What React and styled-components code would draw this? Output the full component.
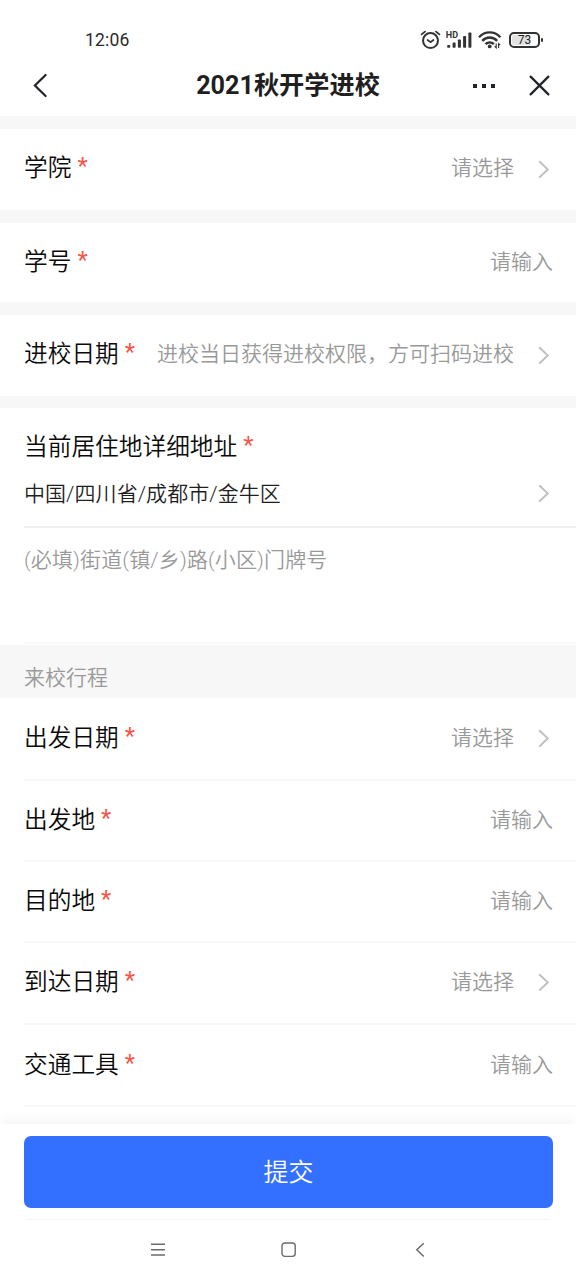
import React from "react"
import styled, { createGlobalStyle } from "styled-components"

const trip = [
  { label: "出发日期", hint: "请选择", arrow: true, height: 82 },
  { label: "出发地", hint: "请输入", height: 81 },
  { label: "目的地", hint: "请输入", height: 81 },
  { label: "到达日期", hint: "请选择", arrow: true, height: 82 },
  { label: "交通工具", hint: "请输入", height: 82 },
]

const Arrow = () => (
  <ArrowIcon viewBox="0 0 12 20">
    <path d="M1.2 1.2 L9.7 9.4 L1.2 17.6" />
  </ArrowIcon>
)

const Field = ({ label, hint, arrow, height, line }) => (
  <Row $height={height} $line={line} $input={!arrow}>
    <Label>
      {label}
      <Star>*</Star>
    </Label>
    <Hint>{hint}</Hint>
    {arrow && <Arrow />}
  </Row>
)

const AlarmIcon = () => (
  <svg width="21" height="20" viewBox="0 0 21 20" fill="none" stroke="#333" strokeWidth="2" strokeLinecap="round">
    <circle cx="10.5" cy="10.6" r="7.5" />
    <path d="M1.6 4.4 L5 1.6 M19.4 4.4 L16 1.6" strokeWidth="1.8" />
    <path d="M7.6 10 L10.4 12.2 L13.4 10" strokeWidth="1.7" strokeLinejoin="round" />
  </svg>
)

const SignalIcon = () => (
  <svg width="27" height="20" viewBox="0 0 27 20">
    <g fill="#333">
      <rect x="1.2" y="15" width="3" height="2.8" rx="0.8" />
      <rect x="6.6" y="12.6" width="3" height="5.2" rx="0.8" />
      <rect x="11.9" y="9.4" width="3" height="8.4" rx="0.8" />
      <rect x="17.1" y="6" width="3" height="11.8" rx="0.8" />
      <rect x="22.4" y="2.5" width="3" height="15.3" rx="0.8" />
    </g>
    <text x="-0.2" y="8" fontSize="9" fontWeight="700" fontFamily="Roboto, sans-serif" fill="#333">
      HD
    </text>
  </svg>
)

const WifiIcon = () => (
  <svg width="24" height="20" viewBox="0 0 24 20" fill="none" stroke="#333" strokeWidth="2.4">
    <path d="M1 7.2 C7 0.7 16.4 0.7 22.4 7.2" />
    <path d="M4.2 10.8 C8.6 6.4 14.8 6.4 19.2 10.8" />
    <path d="M7.5 14.2 C10 11.8 13.4 11.8 15.9 14.2" />
    <circle cx="11.7" cy="16.4" r="1.9" fill="#333" stroke="none" />
    <path d="M18.2 13.4 V17.8 L16.6 16.2 M20.6 18 V13.6 L22.2 15.2" strokeWidth="1.1" />
  </svg>
)

const App = () => {
  return (
    <Page>
      <GlobalStyle />
      <StatusBar>
        <Clock>12:06</Clock>
        <StatusIcons>
          <AlarmIcon />
          <SignalIcon />
          <WifiIcon />
          <Battery>
            <Charge>73</Charge>
          </Battery>
        </StatusIcons>
      </StatusBar>
      <Header>
        <HeaderIcon viewBox="0 0 24 26" $width={24}>
          <path d="M17.6 2 L6.9 12.5 L17.6 23" />
        </HeaderIcon>
        <Title>2021秋开学进校</Title>
        <Dots>
          <i />
          <i />
          <i />
        </Dots>
        <HeaderIcon viewBox="0 0 22 26" $width={22}>
          <path d="M2.6 3.6 L20.4 21.4 M20.4 3.6 L2.6 21.4" />
        </HeaderIcon>
      </Header>

      <Gap $height={13} />
      <Field label="学院" hint="请选择" arrow height={81} />
      <Gap $height={13} />
      <Field label="学号" hint="请输入" height={79} />
      <Gap $height={13} />
      <Field label="进校日期" hint="进校当日获得进校权限，方可扫码进校" arrow height={81} />
      <Gap $height={12} />
      <Address>
        <Label>
          当前居住地详细地址
          <Star>*</Star>
        </Label>
        <Region>
          <span>中国/四川省/成都市/金牛区</span>
          <Arrow />
        </Region>
        <Street>(必填)街道(镇/乡)路(小区)门牌号</Street>
      </Address>
      <SectionTitle>来校行程</SectionTitle>
      <Trip>
        {trip.map(item => (
          <Field key={item.label} {...item} line />
        ))}
      </Trip>

      <Footer>
        <Submit>提交</Submit>
        <NavBar>
          <svg width="16" height="18" viewBox="0 0 16 18" stroke="#6b6b6b" strokeWidth="1.4">
            <path d="M1 3.2 H15 M1 8.7 H15 M1 14 H15" />
          </svg>
          <svg width="18" height="18" viewBox="0 0 18 18" fill="none" stroke="#6b6b6b" strokeWidth="1.4">
            <rect x="1" y="2" width="13.2" height="13.4" rx="2.8" />
          </svg>
          <svg width="12" height="18" viewBox="0 0 12 18" fill="none" stroke="#6b6b6b" strokeWidth="1.5">
            <path d="M9.8 2.2 L2.8 8.8 L9.8 15.5" />
          </svg>
        </NavBar>
      </Footer>
    </Page>
  )
}

const GlobalStyle = createGlobalStyle`
  * {
    box-sizing: border-box;
  }
  body {
    margin: 0;
    background: #fff;
  }
`

const Page = styled.main`
  display: flex;
  flex-direction: column;
  width: 576px;
  height: 1280px;
  overflow: hidden;
  background: #fff;
  font-family: Roboto, "Noto Sans CJK SC", sans-serif;
  font-weight: 350;
  color: #111;
`

const StatusBar = styled.div`
  display: flex;
  align-items: center;
  justify-content: space-between;
  height: 56px;
  padding: 24px 36px 0 85px;
`

const Clock = styled.span`
  font-size: 17.5px;
  font-weight: 400;
  letter-spacing: 0.2px;
  color: #2b2b2b;
`

const StatusIcons = styled.div`
  display: flex;
  align-items: center;
  gap: 5px;
`

const Battery = styled.div`
  position: relative;
  width: 31px;
  height: 16px;
  margin-left: 2px;
  padding: 1px;
  border: 2px solid #333;
  border-radius: 5px;
  &::after {
    content: "";
    position: absolute;
    top: 4px;
    right: -5px;
    width: 2px;
    height: 4px;
    border-radius: 1px;
    background: #333;
  }
`

const Charge = styled.div`
  height: 10px;
  border-radius: 2px;
  background: linear-gradient(to right, #e2e2e2 73%, #fff 73%);
  font-size: 12px;
  font-weight: 400;
  line-height: 11px;
  text-align: center;
  color: #222;
`

const Header = styled.header`
  display: flex;
  align-items: center;
  height: 60px;
  padding: 0 26px 0 28px;
`

const HeaderIcon = styled.svg`
  width: ${props => props.$width}px;
  height: 26px;
  fill: none;
  stroke: #20242a;
  stroke-width: 2.2;
  stroke-linecap: round;
`

const Title = styled.h1`
  flex: 1;
  margin: 0 0 1px 51px;
  font-size: 25.2px;
  font-weight: 700;
  line-height: 36px;
  text-align: center;
  color: #1f1f1f;
`

const Dots = styled.div`
  display: flex;
  gap: 5px;
  margin-right: 33px;
  i {
    width: 4px;
    height: 4px;
    background: #20242a;
  }
`

const Gap = styled.div`
  flex: none;
  height: ${props => props.$height}px;
  background: #f7f7f7;
`

const Row = styled.div`
  display: flex;
  flex: none;
  align-items: center;
  height: ${props => props.$height}px;
  margin-left: 24px;
  padding-top: ${props => (props.$input ? 2 : 0)}px;
  padding-right: ${props => (props.$input ? 23 : 24)}px;
  border-bottom: ${props => (props.$line ? "2px solid #f7f7f7" : "none")};
`

const Label = styled.div`
  margin-bottom: 3px;
  font-size: 23.7px;
  line-height: 36px;
  white-space: nowrap;
  color: #0a0a0a;
`

const Star = styled.span`
  margin-left: 6px;
  font-weight: 400;
  line-height: 20px;
  vertical-align: 2px;
  color: #f5564a;
`

const Hint = styled.div`
  flex: 1;
  margin-bottom: 3px;
  font-size: 21px;
  line-height: 32px;
  text-align: right;
  white-space: nowrap;
  color: #999;
`

const ArrowIcon = styled.svg`
  flex: none;
  width: 12px;
  height: 20px;
  margin-left: 24px;
  margin-right: 2px;
  fill: none;
  stroke: #bfbfbf;
  stroke-width: 2;
`

const Address = styled.section`
  flex: none;
  height: 237px;
  padding: 21px 0 0 24px;
`

const Region = styled.div`
  display: flex;
  align-items: center;
  justify-content: space-between;
  height: 60px;
  padding-right: 24px;
  padding-bottom: 6px;
  border-bottom: 2px solid #f0f0f0;
  font-size: 21px;
  letter-spacing: 0.06px;
  line-height: 32px;
  color: #1f1f1f;
`

const Street = styled.div`
  height: 116px;
  padding-top: 16px;
  border-bottom: 2px solid #f9f9f9;
  font-size: 21px;
  letter-spacing: 0.13px;
  line-height: 32px;
  color: #999;
`

const SectionTitle = styled.div`
  flex: none;
  height: 53px;
  padding: 17px 24px 0;
  background: #f7f7f7;
  font-size: 21px;
  line-height: 32px;
  color: #999;
`

const Trip = styled.section`
  flex: none;
  height: 426px;
  padding-top: 1px;
`

const Footer = styled.footer`
  flex: none;
  height: 156px;
  padding: 12px 23px 0 24px;
  background: #fff;
  box-shadow: 0 -3px 14px rgba(0, 0, 0, 0.05);
`

const Submit = styled.button`
  display: block;
  width: 100%;
  height: 72px;
  padding: 0 0 4px;
  border: none;
  border-radius: 7px;
  background: #3370ff;
  font-family: inherit;
  font-weight: 350;
  font-size: 25px;
  color: #fff;
`

const NavBar = styled.nav`
  display: flex;
  justify-content: space-between;
  margin: 11px 4px 0 3px;
  padding: 21px 123px 0;
  border-top: 1px solid #f4f4f4;
`

export default App
